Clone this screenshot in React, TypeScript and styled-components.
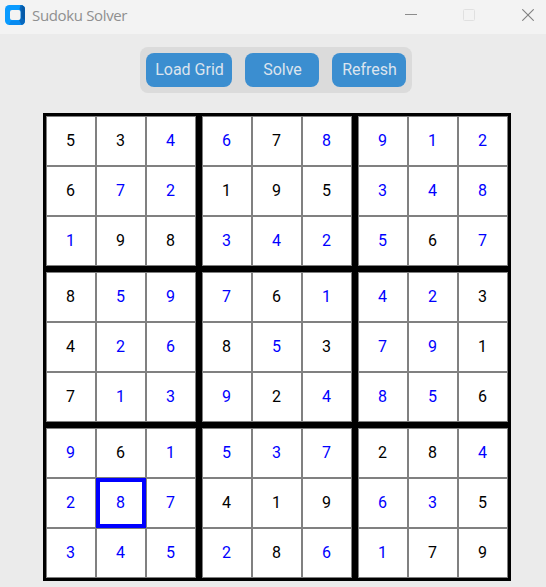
import React, { useState } from "react";
import styled, { createGlobalStyle } from "styled-components";

const GlobalStyle = createGlobalStyle`
  * { box-sizing: border-box; }
  html, body { margin: 0; background: #ebebeb; overflow: hidden; }
`;

const Window = styled.main`
  width: 546px;
  height: 587px;
  display: flex;
  flex-direction: column;
  align-items: center;
  background: #ebebeb;
  font-family: Roboto, "Liberation Sans", sans-serif;
`;

const TitleBar = styled.header`
  width: 100%;
  height: 34px;
  flex: none;
  display: flex;
  align-items: center;
  padding: 0 12px 4px 5px;
  background: #f3f3f3;
`;

const Title = styled.span`
  flex: 1;
  margin-left: 7px;
  padding-bottom: 1px;
  color: #8f8f8f;
  font: 400 15px/20px "Open Sans", "Noto Sans", sans-serif;
  letter-spacing: -0.35px;
`;

const WindowControls = styled.div`
  display: flex;
  gap: 46px;

  & > :last-child {
    margin-left: 1px;
  }
`;

const Toolbar = styled.nav`
  display: flex;
  flex: none;
  gap: 13px;
  margin: 13px 0 0 6px;
  padding: 6px;
  border-radius: 8px;
  background: #dbdbdb;
`;

const ToolButton = styled.button<{ $width: number }>`
  width: ${(p) => p.$width}px;
  height: 34px;
  padding: 0 0 0 1px;
  border: 0;
  border-radius: 8px;
  background: #3b8ed0;
  color: #dce4ee;
  font: 400 16px/34px Roboto, sans-serif;
  white-space: nowrap;
`;

const Board = styled.section`
  display: grid;
  flex: none;
  grid-template-columns: repeat(3, 150px);
  gap: 6px;
  margin: 20px 0 0 8px;
  padding: 3px;
  background: #000;
`;

const Box = styled.div`
  display: grid;
  grid-template: repeat(3, 50px) / repeat(3, 50px);
`;

const Cell = styled.div<{ $solved: boolean; $selected: boolean }>`
  display: flex;
  align-items: center;
  justify-content: center;
  padding-right: 1px;
  border: ${(p) => (p.$selected ? "4px solid #0000ff" : "1px solid #808080")};
  background: #fff;
  color: ${(p) => (p.$solved ? "#0000ff" : "#000")};
  font-size: 16px;
  line-height: 20px;
  cursor: default;
`;

const solution = [
  "534678912",
  "672195348",
  "198342567",
  "859761423",
  "426853791",
  "713924856",
  "961537284",
  "287419635",
  "345286179",
];

// "x" marks a digit given by the puzzle, "." one filled in by the solver.
const givens = [
  "xx..x....",
  "x..xxx...",
  ".xx....x.",
  "x...x...x",
  "x..x.x..x",
  "x...x...x",
  ".x....xx.",
  "...xxx..x",
  "....x..xx",
];

const three = [0, 1, 2];

function AppIcon() {
  return (
    <svg width="20" height="20" viewBox="0 0 20 20">
      <rect width="20" height="20" rx="4.5" fill="#0a9bff" />
      <path d="M15.5 0Q20 0 20 4.5V15.5Q20 20 15.5 20L14 15L15.5 13V6L14.5 4Z" fill="#0868bd" />
      <path d="M17 .5Q20 1.5 20 4.5V15L16.5 13V5Z" fill="#065aa8" />
      <path d="M4 20L6 15.5H14L16.5 19.8Q16 20 15.5 20Z" fill="#078af0" />
      <rect x="5" y="5" width="10.5" height="10" rx="2" fill="#f3f3f3" />
    </svg>
  );
}

export default function App() {
  const [selected, setSelected] = useState("7-1");

  return (
    <Window>
      <GlobalStyle />
      <TitleBar>
        <AppIcon />
        <Title>Sudoku Solver</Title>
        <WindowControls>
          <svg width="12" height="12" viewBox="0 0 12 12">
            <path d="M0 5.5H12" stroke="#8c8c8c" />
          </svg>
          <svg width="12" height="12" viewBox="0 0 12 12">
            <rect x=".5" y=".5" width="11" height="11" rx="1" fill="none" stroke="#e0e0e0" />
          </svg>
          <svg width="12" height="12" viewBox="0 0 12 12">
            <path d="M.3.3L11.7 11.7M11.7.3L.3 11.7" stroke="#808080" strokeWidth="1.1" />
          </svg>
        </WindowControls>
      </TitleBar>
      <Toolbar>
        <ToolButton $width={86}>Load Grid</ToolButton>
        <ToolButton $width={74}>Solve</ToolButton>
        <ToolButton $width={74}>Refresh</ToolButton>
      </Toolbar>
      <Board>
        {three.map((boxRow) =>
          three.map((boxCol) => (
            <Box key={`${boxRow}-${boxCol}`}>
              {three.map((r) =>
                three.map((c) => {
                  const row = boxRow * 3 + r;
                  const col = boxCol * 3 + c;
                  const id = `${row}-${col}`;
                  return (
                    <Cell
                      key={id}
                      $solved={givens[row][col] === "."}
                      $selected={selected === id}
                      onClick={() => setSelected(id)}
                    >
                      {solution[row][col]}
                    </Cell>
                  );
                })
              )}
            </Box>
          ))
        )}
      </Board>
    </Window>
  );
}
